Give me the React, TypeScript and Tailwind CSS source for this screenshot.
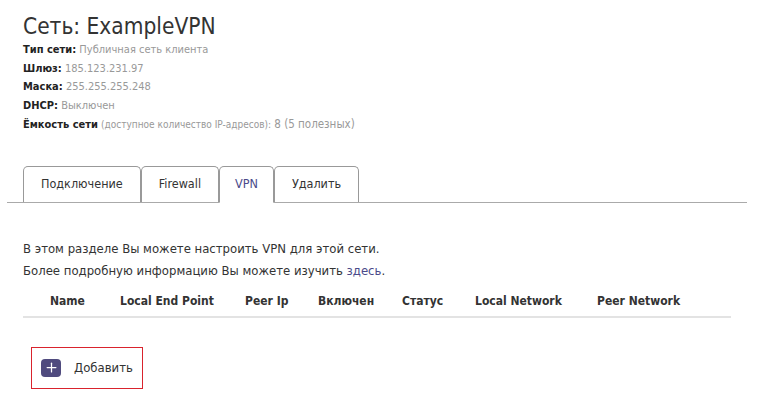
import { Plus } from 'lucide-react';

const info = [
  { label: 'Тип сети:', value: 'Публичная сеть клиента' },
  { label: 'Шлюз:', value: '185.123.231.97' },
  { label: 'Маска:', value: '255.255.255.248' },
  { label: 'DHCP:', value: 'Выключен' },
];

const tabs = ['Подключение', 'Firewall', 'VPN', 'Удалить'];

export default function App() {
  return (
    <div className="min-h-screen bg-white text-[#333] font-['DejaVu_Sans_Condensed','DejaVu_Sans',sans-serif]">
      <div className="pt-[12px] pl-[23px]">
        <h1 className="text-[22.5px] leading-[28px] text-[#333]">Сеть: ExampleVPN</h1>
        <div className="mt-[1px] flex flex-col text-[11px] leading-[18.5px]">
          {info.map((row) => (
            <div key={row.label}>
              <span className="font-bold text-[#222]">{row.label}</span>{' '}
              <span className="text-[#999]">{row.value}</span>
            </div>
          ))}
          <div>
            <span className="font-bold text-[#222]">Ёмкость сети</span>{' '}
            <span className="text-[#999] text-[10px]">(доступное количество IP-адресов):</span>{' '}
            <span className="text-[#999] text-[11.5px]">8 (5 полезных)</span>
          </div>
        </div>
      </div>

      {/* Tabs */}
      <div className="mt-[31px] ml-[7px] w-[740px] flex border-b border-[#aaa] pl-[16px]">
        {tabs.map((t) => {
          const active = t === 'VPN';
          return (
            <div
              key={t}
              className={
                active
                  ? 'relative -mb-px h-[37px] px-[15px] flex items-center border border-b-white border-[#999] rounded-t-[5px] bg-white text-[12.5px] text-[#4a4a8a]'
                  : 'h-[36px] px-[17px] flex items-center border border-b-0 border-[#999] rounded-t-[5px] text-[12.5px] text-[#333]'
              }
            >
              {t}
            </div>
          );
        })}
      </div>

      <div className="pl-[23px] pt-[35px] text-[13px] leading-[22px]">
        <p>В этом разделе Вы можете настроить VPN для этой сети.</p>
        <p>
          Более подробную информацию Вы можете изучить{' '}
          <a href="#" className="text-[#4a4a8a]">здесь</a>.
        </p>
      </div>

      {/* Table header */}
      <div className="ml-[23px] mt-[10px] w-[708px] border-b-2 border-[#e3e3e3] pb-[6px] pl-[27px] flex text-[12px] font-bold text-[#333]">
        <div className="w-[70px]">Name</div>
        <div className="w-[125px]">Local End Point</div>
        <div className="w-[73px]">Peer Ip</div>
        <div className="w-[84px]">Включен</div>
        <div className="w-[73px]">Статус</div>
        <div className="w-[122px]">Local Network</div>
        <div>Peer Network</div>
      </div>

      <div className="pl-[31px] pt-[29px]">
        <button className="w-[112px] h-[42px] border border-[#d9232d] flex items-center pl-[9px] gap-[13px] text-[13px] text-[#333]">
          <span className="w-[20px] h-[18px] rounded-[4px] bg-[#4f4a7e] flex items-center justify-center">
            <Plus className="w-[15px] h-[15px] text-white" strokeWidth={2} />
          </span>
          Добавить
        </button>
      </div>
    </div>
  );
}
